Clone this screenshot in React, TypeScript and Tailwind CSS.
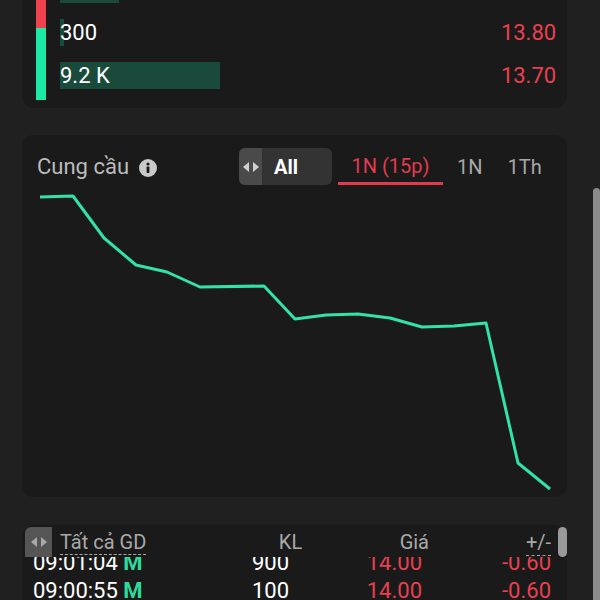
const BOOK = [
  { vol: "1.2 K", bar: 59, price: "13.90" },
  { vol: "300", bar: 4, price: "13.80" },
  { vol: "9.2 K", bar: 160, price: "13.70" },
];

const POINTS = [
  [18, 7], [51, 6], [82, 48], [114, 75], [145, 82], [178, 97], [242, 96], [273, 129],
  [304, 125], [336, 124], [368, 128], [400, 137], [432, 136], [464, 133], [496, 273], [528, 299],
];

const TRADES = [
  { time: "09:01:04", side: "M", vol: "900", price: "14.00", chg: "-0.60" },
  { time: "09:00:55", side: "M", vol: "100", price: "14.00", chg: "-0.60" },
];

function Arrows({ color }: { color: string }) {
  return (
    <svg width="18" height="12" viewBox="0 0 18 12">
      <polygon points="7,1 7,11 1,6" fill={color} />
      <polygon points="11,1 11,11 17,6" fill={color} />
    </svg>
  );
}

export default function App() {
  return (
    <div className="flex h-[600px] w-[600px] overflow-hidden bg-[#202020] font-['Roboto',sans-serif]">
      <div className="flex-1 pl-[22px] pr-[26px]">
        {/* Order book tail */}
        <div className="mt-[-32px] flex rounded-b-xl bg-[#1a1a1a] pb-[8px] pl-[14px] pr-[11px]">
          <div className="flex w-[10px] flex-col">
            <div className="h-[60px] bg-[#f0414f]" />
            <div className="h-[72px] bg-[#1de9a6]" />
          </div>
          <div className="ml-[14px] flex flex-1 flex-col">
            {BOOK.map((r) => (
              <div key={r.price} className="relative flex h-[43px] items-center justify-between">
                <div className="absolute left-0 top-[8px] h-[27px] bg-[#1a4a3c]" style={{ width: r.bar }} />
                <span className="relative text-[22px] text-white">{r.vol}</span>
                <span className="text-[22px] text-[#e8404f]">{r.price}</span>
              </div>
            ))}
          </div>
        </div>

        {/* Cung cau chart */}
        <div className="mt-[27px] rounded-xl bg-[#1a1a1a] pt-[13px]">
          <div className="flex h-[37px] items-center pl-[15px]">
            <span className="text-[22px] text-[#bcbcbc]">Cung cầu</span>
            <svg className="ml-[10px] mt-[2px]" width="18" height="18" viewBox="0 0 18 18">
              <circle cx="9" cy="9" r="9" fill="#c9c9c9" />
              <circle cx="9" cy="5" r="1.6" fill="#1a1a1a" />
              <rect x="7.6" y="7.5" width="2.8" height="6.5" rx="0.8" fill="#1a1a1a" />
            </svg>
            <div className="ml-[82px] flex h-[37px] w-[93px] overflow-hidden rounded-md bg-[#333333]">
              <div className="flex w-[23px] items-center justify-center bg-[#4a4a4a]">
                <Arrows color="#d0d0d0" />
              </div>
              <span className="ml-[12px] self-center text-[20px] font-bold text-white">All</span>
            </div>
            <div className="ml-[6px] flex h-[37px] w-[105px] items-center justify-center border-b-[3px] border-[#e23a4e] pt-[1px] text-[20px] text-[#e23a4e]">
              1N (15p)
            </div>
            <span className="ml-[14px] text-[20px] text-[#a8a8a8]">1N</span>
            <span className="ml-[25px] text-[20px] text-[#a8a8a8]">1Th</span>
          </div>
          <svg width="544" height="307" viewBox="0 0 544 307" className="mt-[5px] block">
            <polyline
              points={POINTS.map((p) => p.join(",")).join(" ")}
              fill="none"
              stroke="#33e2a5"
              strokeWidth="3"
              strokeLinejoin="round"
            />
          </svg>
        </div>

        {/* Trades */}
        <div className="mt-[28px] rounded-t-xl bg-[#1a1a1a] pt-[2px]">
          <div className="relative z-10 flex h-[30px] items-center pl-[3px] text-[20px] text-[#a9a9a9]">
            <div className="flex h-[30px] w-[27px] items-center justify-center rounded-tl-md bg-[#555555]">
              <Arrows color="#a8a8a8" />
            </div>
            <div className="ml-[8px] w-[170px]">
              <span className="border-b border-dashed border-[#a9a9a9] leading-[26px]">Tất cả GD</span>
            </div>
            <span className="ml-[47px] w-[27px] text-center">KL</span>
            <span className="w-[125px] text-right">Giá</span>
            <span className="ml-[97px] border-b border-dashed border-[#a9a9a9] leading-[26px]">+/-</span>
            <div className="ml-[7px] h-[30px] w-[9px] rounded-full bg-[#9a9a9a]" />
          </div>
          <div className="h-[60px] overflow-hidden">
            <div className="mt-[-9px]">
              {TRADES.map((t) => (
                <div key={t.time} className="flex h-[28px] items-center pl-[11px] text-[22px]">
                  <span className="w-[167px] text-white">
                    {t.time} <span className="font-bold text-[#2fd99c]">{t.side}</span>
                  </span>
                  <span className="w-[89px] text-right text-white">{t.vol}</span>
                  <span className="w-[133px] text-right text-[#e8404f]">{t.price}</span>
                  <span className="w-[129px] text-right text-[#e8404f]">{t.chg}</span>
                </div>
              ))}
            </div>
          </div>
        </div>
      </div>
      <div className="w-[8px]">
        <div className="mt-[188px] h-[412px] rounded-t-full bg-[#8a8a8a]" />
      </div>
    </div>
  );
}
